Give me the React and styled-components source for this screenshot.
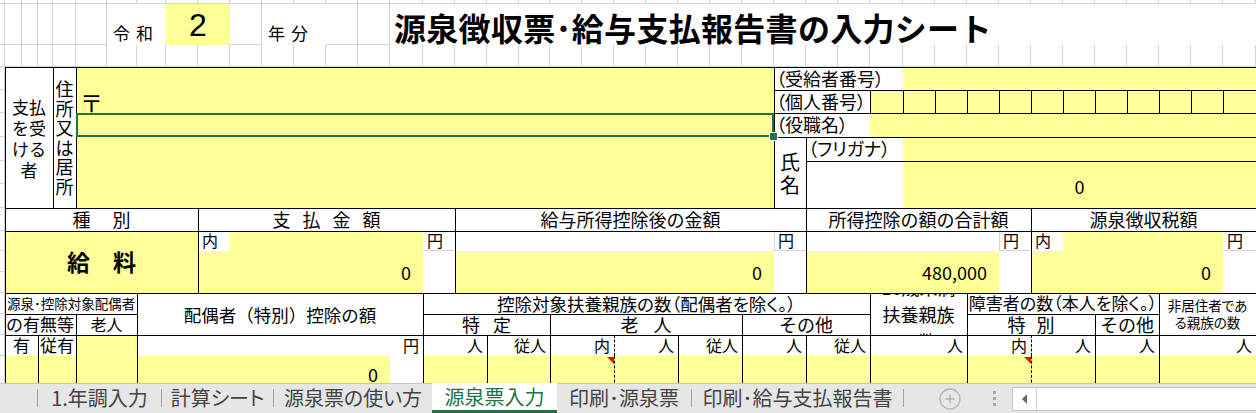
import React from 'react'
import styled, { createGlobalStyle, css } from 'styled-components'

const YELLOW = '#ffff99'
const GRID = '#d4d4d4'
const GREEN = '#217346'

// column / row edges of the worksheet (px)
const XS = [0, 5, 22, 38, 53, 76, 107, 137, 166, 198, 230, 262, 294, 326, 358, 390, 423, 455, 487, 519, 550, 582, 614, 646, 678, 710, 742, 774, 806, 838, 870, 903, 935, 967, 999, 1031, 1063, 1095, 1127, 1159, 1191, 1223, 1256]
const YS = [0, 4, 45, 67, 90, 113, 137, 161, 184, 208, 231, 251, 272, 293, 314, 335, 356, 392]

const tracks = edges => edges.slice(1).map((e, i) => `${e - edges[i]}px`).join(' ')

const SIDE = { t: '0 1px 0', l: '1px 0 0', r: '-1px 0 0', b: '0 -1px 0' }
const lines = (black = '', grey = '') => {
  const list = [
    ...[...black].map(s => `inset ${SIDE[s]} #000`),
    ...[...grey].map(s => `inset ${SIDE[s]} ${GRID}`)
  ]
  return list.length ? list.join(', ') : 'none'
}

const GlobalStyle = createGlobalStyle`
  * { box-sizing: border-box; }
  html, body { margin: 0; padding: 0; background: #fff; }
  body {
    width: 1256px;
    height: 413px;
    overflow: hidden;
    font-family: 'Noto Sans CJK JP', 'Liberation Sans', sans-serif;
    color: #000;
  }
`

const Sheet = styled.div`
  display: grid;
  grid-template-columns: ${tracks(XS)};
  grid-template-rows: ${tracks(YS)};
  height: 383px;
  overflow: hidden;
`

const Blank = styled.div`
  grid-column: ${p => p.$col + 1};
  grid-row: ${p => p.$row + 1};
  box-shadow: inset -1px -1px 0 ${GRID};
`

const Cell = styled.div`
  grid-column: ${p => XS.indexOf(p.$at[0]) + 1} / ${p => XS.indexOf(p.$at[1]) + 1};
  grid-row: ${p => YS.indexOf(p.$at[2]) + 1} / ${p => YS.indexOf(p.$at[3]) + 1};
  position: relative;
  min-width: 0;
  min-height: 0;
  display: flex;
  align-items: ${p => p.$v || 'center'};
  justify-content: ${p => p.$h || 'center'};
  padding: ${p => p.$pad || '0'};
  background: #fff;
  box-shadow: ${p => lines(p.$b, p.$g)};
  border-left: ${p => (p.$dash ? '1px dashed #000' : 'none')};
  font-size: ${p => p.$fs || 18}px;
  letter-spacing: ${p => p.$ls || 0}px;
  line-height: 1.2;
  white-space: nowrap;
  overflow: hidden;
`

const Field = styled(Cell)`
  background: ${YELLOW};
`

const EraText = styled(Cell)`
  justify-content: flex-start;
  align-items: flex-end;
  padding: 0 0 2px 6px;
  font-size: 17px;
  letter-spacing: 6px;
`

const YearBox = styled(Field)`
  font-family: 'Liberation Sans', Arial, sans-serif;
  font-size: 32px;
  padding-top: 2px;
`

const Title = styled(Cell)`
  justify-content: flex-start;
  padding: 5px 0 0 4px;
  font-size: 32px;
  font-weight: 700;
  letter-spacing: 0.3px;
`

const Stack = styled(Cell)`
  flex-direction: column;
  text-align: center;
  line-height: ${p => p.$lh || 20}px;
  white-space: normal;
  font-feature-settings: ${p => (p.$palt ? "'palt'" : 'normal')};
  span { display: block; }
`

const Heading = styled(Cell)`
  padding-left: ${p => p.$ls || 0}px;
`

// labels set in a proportional face, like the narrow brackets of the sheet
const Tag = styled(Cell)`
  font-feature-settings: 'palt';
`

const Unit = styled(Cell)`
  font-size: 16px;
  padding: 0 4px;
`

const Amount = styled(Field)`
  justify-content: flex-end;
  align-items: ${p => p.$v || 'flex-end'};
  padding: ${p => p.$pad || '0 12px 9px 0'};
  font-size: 18px;
`

const Kind = styled(Field)`
  font-size: 23px;
  font-weight: 700;
`

const Postal = styled(Field)`
  justify-content: flex-start;
  padding: 2px 0 0 4px;
  font-size: 23px;
  line-height: 1;
`

const Selected = styled(Field)`
  z-index: 2;
  overflow: visible;
  box-shadow: inset 0 0 0 2px ${GREEN};
  &::after {
    content: '';
    position: absolute;
    right: -4px;
    bottom: -4px;
    width: 7px;
    height: 7px;
    background: ${GREEN};
    border: 1px solid #fff;
  }
`

const NoteField = styled(Field)`
  &::after {
    content: '';
    position: absolute;
    top: 1px;
    right: 0;
    border-top: 7px solid #e8120c;
    border-left: 7px solid transparent;
  }
`

/* sheet tabs */
const TabBar = styled.div`
  height: 30px;
  display: flex;
  align-items: stretch;
  background: #e6e6e6;
  border-top: 1px solid #c6c6c6;
  font-size: 20px;
  color: #444;
  font-feature-settings: 'palt';
`

const Lead = styled.div`
  width: 37px;
`

const Sep = styled.span`
  width: 1px;
  height: 18px;
  align-self: center;
  margin-bottom: 2px;
  background: #a0a0a0;
`

const Tab = styled.div`
  width: ${p => p.$w}px;
  display: flex;
  align-items: center;
  justify-content: center;
  padding-bottom: 3px;
  white-space: nowrap;
  ${p => p.$active && css`
    margin-top: -1px;
    background: #fff;
    color: ${GREEN};
    box-shadow: inset 0 -3px 0 ${GREEN};
  `}
`

const AddSlot = styled.div`
  display: flex;
  align-items: center;
  padding-left: 35px;
  svg { display: block; }
`

const Dots = styled.div`
  margin-left: 32px;
  align-self: center;
  display: flex;
  flex-direction: column;
  gap: 3px;
  span {
    width: 3px;
    height: 3px;
    background: #a6a6a6;
  }
`

const ScrollBox = styled.div`
  flex: 1;
  margin-left: 16px;
  align-self: center;
  height: 24px;
  display: flex;
  background: #fff;
  border: 1px solid #c6c6c6;
  border-right: none;
`

const ScrollArrow = styled.div`
  width: 24px;
  display: flex;
  align-items: center;
  justify-content: center;
  border-right: 1px solid #d0d0d0;
  &::before {
    content: '';
    border-right: 5px solid #6a6a6a;
    border-top: 5px solid transparent;
    border-bottom: 5px solid transparent;
  }
`

const MYNUMBER = [870, 903, 935, 967, 999, 1031, 1063, 1095, 1127, 1159, 1191, 1223, 1256]

const PEOPLE = [
  { x: [423, 487], t: '人' },
  { x: [487, 550], t: '従人' },
  { x: [550, 614], t: '内', note: true },
  { x: [614, 678], t: '人', dash: true },
  { x: [678, 742], t: '従人' },
  { x: [742, 806], t: '人' },
  { x: [806, 870], t: '従人' },
  { x: [870, 967], t: '人' },
  { x: [967, 1031], t: '内', note: true },
  { x: [1031, 1095], t: '人', dash: true },
  { x: [1095, 1159], t: '人' },
  { x: [1159, 1256], t: '人' }
]

const Lines = ({ items }) => items.map((t, i) => <span key={i}>{t}</span>)

const SheetGrid = () => {
  const blanks = []
  for (let r = 0; r < 3; r++) {
    for (let c = 0; c < XS.length - 1; c++) blanks.push(<Blank key={`h${r}-${c}`} $row={r} $col={c} />)
  }
  for (let r = 3; r < YS.length - 1; r++) blanks.push(<Blank key={`m${r}`} $row={r} $col={0} />)

  return (
    <Sheet>
      {blanks}

      {/* title row */}
      <EraText $at={[107, 166, 4, 45]}>令和</EraText>
      <YearBox $at={[166, 230, 4, 45]}>2</YearBox>
      <EraText $at={[262, 326, 4, 45]}>年分</EraText>
      <Title $at={[390, 1256, 4, 45]}>源泉徴収票･給与支払報告書の入力シート</Title>

      {/* payee */}
      <Stack $at={[5, 53, 67, 208]} $b='tl' $fs={17} $lh={21}>
        <Lines items={['支払', 'を受', 'ける', '者']} />
      </Stack>
      <Stack $at={[53, 76, 67, 208]} $b='tl' $fs={18} $lh={19.5}>
        <Lines items={['住', '所', '又', 'は', '居', '所']} />
      </Stack>
      <Field $at={[76, 774, 67, 90]} $b='tl' />
      <Postal $at={[76, 774, 90, 113]} $b='l'>〒</Postal>
      <Selected $at={[76, 774, 113, 137]} />
      <Field $at={[76, 774, 137, 208]} $b='l' />

      <Tag $at={[774, 903, 67, 90]} $b='tl' $h='flex-start' $pad='0 0 0 2px' $fs={18}>（受給者番号）</Tag>
      <Field $at={[903, 1256, 67, 90]} $b='t' />
      <Tag $at={[774, 870, 90, 113]} $b='tl' $h='flex-start' $pad='0 0 0 2px' $fs={18}>（個人番号）</Tag>
      {MYNUMBER.slice(0, -1).map((x, i) => (
        <Field key={x} $at={[x, MYNUMBER[i + 1], 90, 113]} $b='tl' />
      ))}
      <Tag $at={[774, 870, 113, 137]} $b='tl' $h='flex-start' $pad='0 0 0 2px' $fs={18}>（役職名）</Tag>
      <Field $at={[870, 1256, 113, 137]} $b='t' />
      <Stack $at={[774, 806, 137, 208]} $b='tl' $fs={20} $lh={23}>
        <Lines items={['氏', '名']} />
      </Stack>
      <Tag $at={[806, 903, 137, 161]} $b='tl' $h='flex-start' $pad='0 0 0 2px' $fs={18}>（フリガナ）</Tag>
      <Field $at={[903, 1256, 137, 161]} $b='t' />
      <Cell $at={[806, 903, 161, 208]} $b='tl' />
      <Field $at={[903, 1256, 161, 208]} $b='t' $pad='5px 0 0'>0</Field>

      {/* amounts */}
      <Heading $at={[5, 198, 208, 231]} $b='tl' $ls={22}>種別</Heading>
      <Heading $at={[198, 455, 208, 231]} $b='tl' $ls={12}>支払金額</Heading>
      <Heading $at={[455, 806, 208, 231]} $b='tl'>給与所得控除後の金額</Heading>
      <Heading $at={[806, 1031, 208, 231]} $b='tl'>所得控除の額の合計額</Heading>
      <Heading $at={[1031, 1256, 208, 231]} $b='tl'>源泉徴収税額</Heading>

      <Kind $at={[5, 198, 231, 293]} $b='tl'>給　料</Kind>
      <Unit $at={[198, 230, 231, 251]} $b='tl' $h='flex-start' $v='flex-start' $pad='1px 2px'>内</Unit>
      <Field $at={[230, 423, 231, 251]} $b='t' />
      <Unit $at={[423, 455, 231, 251]} $b='t' $g='b' $h='flex-start' $pad='0 3px'>円</Unit>
      <Amount $at={[198, 423, 251, 293]} $b='l'>0</Amount>
      <Cell $at={[423, 455, 251, 293]} />

      <Cell $at={[455, 774, 231, 251]} $b='tl' />
      <Unit $at={[774, 806, 231, 251]} $b='t' $g='lb' $h='flex-start' $pad='0 3px'>円</Unit>
      <Amount $at={[455, 774, 251, 293]} $b='l'>0</Amount>
      <Cell $at={[774, 806, 251, 293]} />

      <Cell $at={[806, 999, 231, 251]} $b='tl' />
      <Unit $at={[999, 1031, 231, 251]} $b='t' $g='lb' $h='flex-start' $pad='0 3px'>円</Unit>
      <Amount $at={[806, 999, 251, 293]} $b='l'>480,000</Amount>
      <Cell $at={[999, 1031, 251, 293]} />

      <Unit $at={[1031, 1063, 231, 251]} $b='tl' $h='flex-start' $v='flex-start' $pad='1px 2px'>内</Unit>
      <Field $at={[1063, 1223, 231, 251]} $b='t' />
      <Unit $at={[1223, 1256, 231, 251]} $b='t' $g='b' $h='flex-start' $pad='0 3px'>円</Unit>
      <Amount $at={[1031, 1223, 251, 293]} $b='l'>0</Amount>
      <Cell $at={[1223, 1256, 251, 293]} />

      {/* deductions / dependants */}
      <Tag $at={[5, 137, 293, 314]} $b='tl' $h='flex-start' $pad='0 0 0 2px' $fs={13.5}>源泉･控除対象配偶者</Tag>
      <Heading $at={[137, 423, 293, 335]} $b='tl' $fs={17.5}>配偶者（特別）控除の額</Heading>
      <Tag $at={[423, 870, 293, 314]} $b='tl' $fs={17.5}>控除対象扶養親族の数（配偶者を除く。）</Tag>
      <Stack $at={[870, 967, 293, 335]} $b='tl' $fs={18} $lh={27}>
        <Lines items={['16歳未満', '扶養親族', 'の数']} />
      </Stack>
      <Tag $at={[967, 1159, 293, 314]} $b='tl' $fs={17}>障害者の数（本人を除く。）</Tag>
      <Stack $at={[1159, 1256, 293, 335]} $b='tl' $fs={13.5} $lh={17} $palt>
        <Lines items={['非居住者であ', 'る親族の数']} />
      </Stack>

      <Cell $at={[5, 76, 314, 335]} $b='tl' $h='flex-start' $pad='0 0 0 1px' $fs={17}>の有無等</Cell>
      <Cell $at={[76, 137, 314, 335]} $b='tl' $fs={16}>老人</Cell>
      <Heading $at={[423, 550, 314, 335]} $b='tl' $ls={13}>特定</Heading>
      <Heading $at={[550, 742, 314, 335]} $b='tl' $ls={15}>老人</Heading>
      <Heading $at={[742, 870, 314, 335]} $b='tl'>その他</Heading>
      <Heading $at={[967, 1095, 314, 335]} $b='tl' $ls={11}>特別</Heading>
      <Heading $at={[1095, 1159, 314, 335]} $b='tl'>その他</Heading>

      <Cell $at={[5, 38, 335, 356]} $b='tl' $fs={17}>有</Cell>
      <Cell $at={[38, 76, 335, 356]} $b='tl' $h='flex-start' $pad='0 0 0 2px' $fs={17}>従有</Cell>
      <Field $at={[76, 137, 335, 392]} $b='tl' />
      <Field $at={[5, 38, 356, 392]} $b='l' />
      <Field $at={[38, 76, 356, 392]} $b='l' />
      <Unit $at={[137, 423, 335, 356]} $b='tl' $h='flex-end' $pad='0 5px'>円</Unit>
      <Amount $at={[137, 390, 356, 392]} $b='l' $v='flex-start' $pad='8px 12px 0 0'>0</Amount>
      <Cell $at={[390, 423, 356, 392]} />

      {PEOPLE.map(p => (
        <Unit key={`u${p.x[0]}`} $at={[p.x[0], p.x[1], 335, 356]} $b={p.dash ? 't' : 'tl'} $dash={p.dash} $h='flex-end' $pad='0 4px'>{p.t}</Unit>
      ))}
      {PEOPLE.map(p => {
        const Box = p.note ? NoteField : Field
        return <Box key={`f${p.x[0]}`} $at={[p.x[0], p.x[1], 356, 392]} $b={p.dash ? '' : 'l'} $dash={p.dash} />
      })}
    </Sheet>
  )
}

const SheetTabs = () => (
  <TabBar>
    <Lead />
    <Sep />
    <Tab $w={123}>1.年調入力</Tab>
    <Sep />
    <Tab $w={111}>計算シート</Tab>
    <Sep />
    <Tab $w={158}>源泉票の使い方</Tab>
    <Tab $w={125} $active>源泉票入力</Tab>
    <Tab $w={134}>印刷･源泉票</Tab>
    <Sep />
    <Tab $w={211}>印刷･給与支払報告書</Tab>
    <Sep />
    <AddSlot>
      <svg width='22' height='22' viewBox='0 0 22 22'>
        <circle cx='11' cy='11' r='10' fill='none' stroke='#b4b4b4' strokeWidth='1.3' />
        <path d='M11 6.5v9M6.5 11h9' stroke='#b4b4b4' strokeWidth='1.3' />
      </svg>
    </AddSlot>
    <Dots>
      <span />
      <span />
      <span />
    </Dots>
    <ScrollBox>
      <ScrollArrow />
    </ScrollBox>
  </TabBar>
)

export default function App () {
  return (
    <>
      <GlobalStyle />
      <SheetGrid />
      <SheetTabs />
    </>
  )
}
